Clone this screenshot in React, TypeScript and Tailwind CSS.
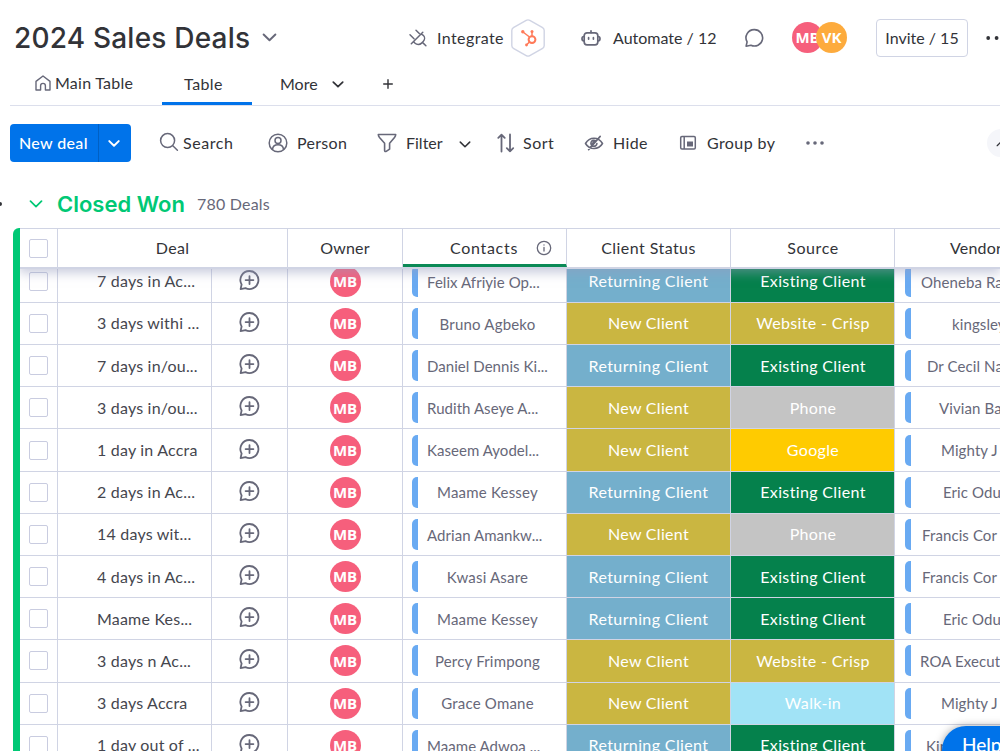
import type { ReactNode } from "react";

type Source = "existing" | "crisp" | "phone" | "google" | "walkin";
interface Deal {
  name: string;
  contact: string;
  returning: boolean;
  source: Source;
  vendor: string;
  pad: string;
}

const sources: Record<Source, { label: string; color: string }> = {
  existing: { label: "Existing Client", color: "bg-[#05814c]" },
  crisp: { label: "Website - Crisp", color: "bg-[#cab641]" },
  phone: { label: "Phone", color: "bg-[#c4c4c4]" },
  google: { label: "Google", color: "bg-[#ffcb00]" },
  walkin: { label: "Walk-in", color: "bg-[#a1e3f6]" },
};

const deals: Deal[] = [
  { name: "7 days in Ac...", contact: "Felix Afriyie Op...", returning: true, source: "existing", vendor: "Oheneba Ra", pad: "pl-[10px]" },
  { name: "3 days withi ...", contact: "Bruno Agbeko", returning: false, source: "crisp", vendor: "kingsley", pad: "pl-[41px]" },
  { name: "7 days in/ou...", contact: "Daniel Dennis Ki...", returning: true, source: "existing", vendor: "Dr Cecil Na", pad: "pl-[16px]" },
  { name: "3 days in/ou...", contact: "Rudith Aseye A...", returning: false, source: "phone", vendor: "Vivian Ba", pad: "pl-[28px]" },
  { name: "1 day in Accra", contact: "Kaseem Ayodel...", returning: false, source: "google", vendor: "Mighty J", pad: "pl-[30px]" },
  { name: "2 days in Ac...", contact: "Maame Kessey", returning: true, source: "existing", vendor: "Eric Odu", pad: "pl-[32px]" },
  { name: "14 days wit...", contact: "Adrian Amankw...", returning: false, source: "phone", vendor: "Francis Cor", pad: "pl-[11px]" },
  { name: "4 days in Ac...", contact: "Kwasi Asare", returning: true, source: "existing", vendor: "Francis Cor", pad: "pl-[11px]" },
  { name: "Maame Kes...", contact: "Maame Kessey", returning: true, source: "existing", vendor: "Eric Odu", pad: "pl-[32px]" },
  { name: "3 days n Ac...", contact: "Percy Frimpong", returning: false, source: "crisp", vendor: "ROA Execut", pad: "pl-[9px]" },
  { name: "3 days Accra", contact: "Grace Omane", returning: false, source: "walkin", vendor: "Mighty J", pad: "pl-[30px]" },
  { name: "1 day out of ...", contact: "Maame Adwoa ...", returning: true, source: "existing", vendor: "Kingsley", pad: "pl-[15px]" },
];

function Icon({ children, className, box = "0 0 20 20", sw = 1.5 }: { children: ReactNode; className: string; box?: string; sw?: number }) {
  return (
    <svg viewBox={box} className={`shrink-0 ${className}`} fill="none" stroke="currentColor" strokeWidth={sw} strokeLinecap="round" strokeLinejoin="round">
      {children}
    </svg>
  );
}

function Chevron({ className, sw = 1.6 }: { className: string; sw?: number }) {
  return (
    <Icon box="0 0 14 8" className={className} sw={sw}>
      <path d="M1.5 1.2 7 6.6l5.5-5.4" />
    </Icon>
  );
}

function Checkbox() {
  return <span className="h-[19px] w-[19px] shrink-0 rounded-[2px] border border-[#c9cce0] bg-white" />;
}

function Owner() {
  return (
    <span className="flex h-[31px] w-[31px] items-center justify-center rounded-full bg-[#f65f7c] font-['Open_Sans'] text-[15px] font-bold text-white">MB</span>
  );
}

function TopBar() {
  return (
    <div className="flex h-[75px] items-center pl-[14px]">
      <h1 className="w-[237px] shrink-0 whitespace-nowrap font-['Inter'] text-[28px] font-medium tracking-[0.2px]">2024 Sales Deals</h1>
      <Chevron className="ml-[11px] h-[9px] w-[15px] text-[#676879]" sw={1.8} />
      <Icon className="ml-[131px] h-5 w-5 text-[#676879]" sw={1.5}>
        <path d="M3.300 15.700 14.800 4.200M2 6.800l4 4M8 2.200l3.300 3.300M5.500 13.500l1.600 1.700c1.700 1.700 4.700 1.700 6.500-.1l1.600-1.600c1.800-1.800 1.800-4.500.1-6.200L13 5.900M14.700 14.600l3.200 3.200" />
      </Icon>
      <span className="ml-[9px] w-[74px] shrink-0 tracking-[0.4px]">Integrate</span>
      <svg viewBox="0 0 34 38" className="h-[38px] w-[34px] shrink-0" fill="none">
        <path d="M15.2 1.4q1.8-1 3.6 0l12.800 7.2q1.600 1 1.600 2.800v15.200q0 1.800-1.600 2.800l-12.800 7.2q-1.800 1-3.600 0L2.4 29.4Q.8 28.4.8 26.6V11.4q0-1.800 1.600-2.800Z" stroke="#d0d4e4" strokeWidth="1.4" />
        <g stroke="#ff7a59">
          <circle cx="21" cy="20.600" r="3.400" strokeWidth="2" />
          <path d="m12 13 6.500 5M21 13v4M18.400 23l-2.700 2.800" strokeWidth="1.500" />
        </g>
        <g fill="#ff7a59">
          <circle cx="11.800" cy="12.700" r="1.700" />
          <circle cx="21" cy="12.500" r="1.500" />
          <circle cx="15.500" cy="26" r="1.400" />
        </g>
      </svg>
      <Icon className="ml-[36px] h-5 w-5 text-[#676879]" sw={1.7}>
        <rect x="3.200" y="4.800" width="13.600" height="12" rx="2.800" />
        <path d="M10 4.600V2.800M3 8.500c-1.600 0-2 .7-2 2.200s.4 2.200 2 2.200M17 8.500c1.600 0 2 .7 2 2.200s-.4 2.200-2 2.200M7.600 9.700v1.400M12.400 9.700v1.400" />
      </Icon>
      <span className="ml-[12px] w-[130px] shrink-0">Automate / 12</span>
      <Icon className="ml-[1px] h-5 w-5 text-[#676879]" sw={1.600}>
        <path d="M10.400 1.600a8.200 8.200 0 1 1-3.500 15.600L2.100 18.200l1-4.300A8.200 8.200 0 0 1 10.400 1.600Z" />
      </Icon>
      <div className="ml-[28px] flex w-[55px] shrink-0 font-['Open_Sans'] text-[15px] font-bold text-white">
        <span className="flex h-[31px] w-[31px] shrink-0 items-center justify-center rounded-full bg-[#f65f7c]">MB</span>
        <span className="z-10 -ml-[7px] flex h-[31px] w-[31px] shrink-0 items-center justify-center rounded-full bg-[#fdab3d]">VK</span>
      </div>
      <span className="ml-[29px] flex h-[38px] w-[92px] shrink-0 items-center justify-center rounded-[4px] border border-[#d0d4e4]">Invite / 15</span>
      <svg viewBox="0 0 22 4" className="ml-[18px] h-1 w-[22px] shrink-0" fill="#323338">
        <circle cx="2.200" cy="2" r="1.900" /><circle cx="10.600" cy="2" r="1.900" /><circle cx="19" cy="2" r="1.900" />
      </svg>
    </div>
  );
}

function Tabs() {
  return (
    <div className="ml-[10px] flex h-[31px] border-b border-[#dcdfec]">
      <div className="flex h-[15px] w-[152px] items-center pl-[25px]">
        <Icon className="h-4 w-4 text-[#676879]" box="0 0 16 16" sw={1.400}>
          <path d="M1 15V6.400L8 1l7 5.400V15h-4.600v-4.200a2.400 2.400 0 0 0-4.800 0V15Z" />
        </Icon>
        <span className="ml-1 tracking-[0.25px]">Main Table</span>
      </div>
      <div className="flex h-[30px] w-[90px] justify-center border-b-[3px] border-[#0073ea] pr-[7px]">
        <span className="flex h-[18px] items-center tracking-[0.4px]">Table</span>
      </div>
      <div className="flex h-[18px] items-center pl-[28px]">
        <span className="w-[52px]">More</span>
        <Chevron className="h-[7px] w-[12px]" sw={2} />
        <Icon className="ml-[39px] h-[10px] w-[10px]" box="0 0 10 10" sw={1.400}>
          <path d="M5 .7v8.600M.7 5h8.600" />
        </Icon>
      </div>
    </div>
  );
}

function Toolbar() {
  return (
    <div className="mt-[18px] flex h-[38px] items-center pl-[10px]">
      <div className="flex h-[38px] w-[121px] shrink-0 items-center rounded-[4px] bg-[#0073ea] text-white">
        <span className="flex h-full w-[89px] items-center whitespace-nowrap border-r border-[#0060c4] pl-[9px] font-medium tracking-[0.35px]">New deal</span>
        <Chevron className="ml-[9px] h-[7px] w-[12px]" sw={2.300} />
      </div>
      <Icon className="-mt-[2px] ml-[28px] h-5 w-5 text-[#676879]" sw={1.500}>
        <circle cx="8.600" cy="8.600" r="7" /><path d="m13.800 13.800 4.600 4.400" />
      </Icon>
      <span className="ml-[4px] w-[86px] shrink-0 tracking-[0.55px]">Search</span>
      <Icon className="-ml-[1px] h-5 w-5 text-[#676879]" sw={1.500}>
        <circle cx="10" cy="10" r="8.800" /><circle cx="10" cy="7.600" r="3" /><path d="M4.500 16.400c.2-3 2.200-4.600 5.500-4.600s5.300 1.600 5.500 4.600" />
      </Icon>
      <span className="ml-[9px] w-[80px] shrink-0 tracking-[0.3px]">Person</span>
      <Icon className="h-5 w-5 text-[#676879]" sw={1.600}>
        <path d="M1.300 1.500h17.400c0 1.200-.4 1.900-1.200 2.900L12.600 10.300v5.800l-3.400 2.300c-.7.4-1.600 0-1.600-.8v-7.300L2.500 4.400C1.700 3.400 1.300 2.700 1.300 1.500Z" />
      </Icon>
      <span className="ml-[9px] w-[53px] shrink-0">Filter</span>
      <Chevron className="mt-[2px] h-[7px] w-[12px]" sw={1.800} />
      <Icon className="ml-[25px] h-5 w-5 text-[#676879]" sw={1.800}>
        <path d="M5.500 18.500V1.700M2.300 4.900l3.200-3.200 3.200 3.200M14 1.500v16.800M10.800 15.100l3.200 3.200 3.200-3.200" />
      </Icon>
      <span className="ml-[7px] w-[61px] shrink-0 tracking-[0.5px]">Sort</span>
      <Icon className="h-5 w-5 text-[#676879]" sw={1.600}>
        <path d="M1.500 10.500C3.500 7 6.500 5.200 10 5.200s6.500 1.800 8.500 5.300c-2 3.300-5 5-8.500 5s-6.500-1.700-8.500-5ZM4.600 16.600 16.200 3.400M11.600 7.800a3 3 0 1 0 1.300 2.800M8.200 12.500c0-2.500 1-3.700 3.400-4.700" />
      </Icon>
      <span className="ml-[9px] w-[66px] shrink-0 tracking-[0.4px]">Hide</span>
      <svg viewBox="0 0 18 16" className="h-4 w-[18px] shrink-0 text-[#676879]" fill="none" stroke="currentColor" strokeWidth="1.500">
        <rect x="1.700" y="1.500" width="14.600" height="12.500" rx="1.200" /><path d="M5.200 1.500V14" /><path d="M8 6.500h6v5H8Z" fill="currentColor" stroke="none" />
      </svg>
      <span className="ml-[10px] w-[99px] shrink-0 tracking-[0.4px]">Group by</span>
      <svg viewBox="0 0 18 4" className="h-1 w-[18px] shrink-0" fill="#676879">
        <circle cx="2" cy="2" r="1.800" /><circle cx="9" cy="2" r="1.800" /><circle cx="16" cy="2" r="1.800" />
      </svg>
      <span className="ml-[163px] flex h-7 w-7 shrink-0 items-center justify-center rounded-full bg-[#f5f6fa]">
        <Chevron className="h-[7px] w-[11px] rotate-180" />
      </span>
    </div>
  );
}

function ColumnHeader() {
  const cell = "flex h-full shrink-0 items-center justify-center border-r border-[#d0d4e4]";
  return (
    <div className="relative z-10 flex h-[41px] border-t border-b-2 border-[#d0d4e4] bg-white shadow-[0_3px_10px_1px_rgba(150,155,190,0.5)]">
      <div className={`${cell} w-[38px]`}><Checkbox /></div>
      <div className={`${cell} w-[230px] tracking-[0.3px]`}>Deal</div>
      <div className={`${cell} w-[115px] tracking-[0.2px]`}>Owner</div>
      <div className={`${cell} w-[164px] border-b-[3px] border-b-[#0b8a56] pt-[3px] pl-[33px]`}>
        <span className="w-[82px] tracking-[0.7px]">Contacts</span>
        <Icon className="ml-1 h-4 w-4 text-[#676879]" box="0 0 16 16" sw={1.300}>
          <circle cx="8" cy="8" r="6.700" /><path d="M8 7.500v3.500M8 5v.1" />
        </Icon>
      </div>
      <div className={`${cell} w-[164px] tracking-[0.45px]`}>Client Status</div>
      <div className={`${cell} w-[164px] pl-px tracking-[0.6px]`}>Source</div>
      <div className="flex items-center pl-[55px] tracking-[0.2px]">Vendor</div>
    </div>
  );
}

function Row({ deal }: { deal: Deal }) {
  const cell = "flex h-full shrink-0 items-center border-r border-b border-[#d0d4e4]";
  const source = sources[deal.source];
  const truncated = deal.contact.endsWith("...");
  return (
    <div className="flex h-[42.2px]">
      <div className={`${cell} w-[38px] justify-center`}><Checkbox /></div>
      <div className={`${cell} w-[154px] pl-[39px] tracking-[0.2px] text-[#45464e]`}>{deal.name}</div>
      <div className={`${cell} w-[76px] justify-center pr-[2px]`}>
        <Icon className="-mt-[3px] h-[22px] w-[22px] text-[#676879]" box="0 0 22 22" sw={1.800}>
          <path d="M11.300 2a9 9 0 1 1-3.800 17.100l-4.900 1 1-4.600A9 9 0 0 1 11.300 2ZM11.500 7.200v7.800M7.600 11.100h7.800" />
        </Icon>
      </div>
      <div className={`${cell} w-[115px] justify-center`}><Owner /></div>
      <div className={`${cell} w-[164px] pl-[9px] text-[15px] text-[#676879]`}>
        <span className="h-[31px] w-[6px] shrink-0 rounded-l-[5px] bg-[#69aaf2]" />
        <span className={`w-[125px] shrink-0 pt-px ${truncated ? "ml-[9px] tracking-[0.05px]" : "ml-[7px] text-center tracking-[0.2px]"}`}>{deal.contact}</span>
      </div>
      <div className={`${cell} w-[164px] justify-center text-white ${deal.returning ? "bg-[#74afcc] tracking-[0.38px]" : "bg-[#cab641] tracking-[0.3px]"}`}>
        {deal.returning ? "Returning Client" : "New Client"}
      </div>
      <div className={`${cell} w-[164px] justify-center pl-px tracking-[0.35px] text-white ${source.color}`}>{source.label}</div>
      <div className="flex w-[200px] shrink-0 items-center border-b border-[#d0d4e4] pl-[10px] text-[15px] text-[#676879]">
        <span className="h-[31px] w-[6px] shrink-0 rounded-l-[5px] bg-[#69aaf2]" />
        <span className={`pt-px tracking-[0.1px] ${deal.pad}`}>{deal.vendor}</span>
      </div>
    </div>
  );
}

export default function App() {
  return (
    <main className="relative flex h-[751px] w-[1000px] flex-col overflow-hidden whitespace-nowrap bg-white font-['Lato',sans-serif] text-base text-[#323338]">
      <TopBar />
      <Tabs />
      <Toolbar />
      <div className="mt-[21px] mb-[3px] flex h-[42px] shrink-0 items-center">
        <span className="-ml-[2px] h-1 w-1 rounded-full bg-[#323338]" />
        <Chevron className="ml-[27px] h-2 w-[14px] text-[#00c875]" sw={1.700} />
        <span className="ml-[14px] w-[140px] font-['Inter'] text-[22px] font-semibold text-[#00c875]">Closed Won</span>
        <span className="tracking-[0.2px] text-[#676879]">780 Deals</span>
      </div>
      <div className="flex min-h-0 flex-1 pl-[13px]">
        <div className="w-[7px] shrink-0 rounded-tl-[6px] bg-[#00c875]" />
        <div className="min-w-0 flex-1 overflow-hidden">
          <ColumnHeader />
          <div className="-mt-[8.3px]">
            {deals.map((deal, i) => <Row key={i} deal={deal} />)}
          </div>
        </div>
      </div>
      <div className="absolute top-[726px] left-[942px] z-20 h-12 w-24 rounded-full bg-[#0073ea] pt-[5px] pl-5 text-[19px] font-medium text-white shadow-[0_0_8px_rgba(0,0,0,0.35)]">Help</div>
    </main>
  );
}
